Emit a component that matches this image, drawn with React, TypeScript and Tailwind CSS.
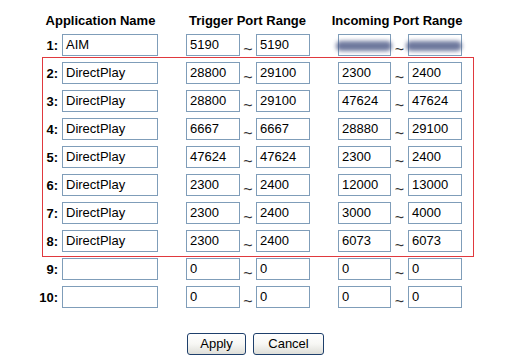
import React from "react";

type Rule = {
  name: string;
  trigStart: string;
  trigEnd: string;
  inStart: string;
  inEnd: string;
  hidden?: boolean;
};

const rules: Rule[] = [
  { name: "AIM", trigStart: "5190", trigEnd: "5190", inStart: "", inEnd: "", hidden: true },
  { name: "DirectPlay", trigStart: "28800", trigEnd: "29100", inStart: "2300", inEnd: "2400" },
  { name: "DirectPlay", trigStart: "28800", trigEnd: "29100", inStart: "47624", inEnd: "47624" },
  { name: "DirectPlay", trigStart: "6667", trigEnd: "6667", inStart: "28880", inEnd: "29100" },
  { name: "DirectPlay", trigStart: "47624", trigEnd: "47624", inStart: "2300", inEnd: "2400" },
  { name: "DirectPlay", trigStart: "2300", trigEnd: "2400", inStart: "12000", inEnd: "13000" },
  { name: "DirectPlay", trigStart: "2300", trigEnd: "2400", inStart: "3000", inEnd: "4000" },
  { name: "DirectPlay", trigStart: "2300", trigEnd: "2400", inStart: "6073", inEnd: "6073" },
  { name: "", trigStart: "0", trigEnd: "0", inStart: "0", inEnd: "0" },
  { name: "", trigStart: "0", trigEnd: "0", inStart: "0", inEnd: "0" },
];

const Field = ({ value, width, blurred }: { value: string; width: string; blurred?: boolean }) => (
  <div
    className={`relative h-[22px] ${width} shrink-0 border border-[#7f9db9] bg-white pl-[3px] text-[13px] leading-[20px] text-black`}
  >
    {value}
    {blurred && (
      <span className="absolute left-[-3px] top-[6px] h-[10px] w-[56px] rounded-full bg-[#4a5785] opacity-80 blur-[2px]" />
    )}
  </div>
);

const Tilde = ({ width }: { width: string }) => (
  <span className={`${width} shrink-0 pt-[8px] text-center text-[16px] leading-[16px] text-[#333]`}>~</span>
);

const Row = ({ idx, rule, labelWidth }: { idx: number; rule: Rule; labelWidth: string }) => (
  <div className="flex h-[22px] items-start">
    <span className={`${labelWidth} shrink-0 pt-[4px] text-right text-[13px] font-bold leading-[16px]`}>
      {idx}:
    </span>
    <div className="ml-[4px]">
      <Field value={rule.name} width="w-[96px]" />
    </div>
    <div className="ml-[28px] flex">
      <Field value={rule.trigStart} width="w-[54px]" />
      <Tilde width="w-[16px]" />
      <Field value={rule.trigEnd} width="w-[54px]" />
    </div>
    <div className="ml-[28px] flex">
      <Field value={rule.inStart} width="w-[53px]" blurred={rule.hidden} />
      <Tilde width="w-[17px]" />
      <Field value={rule.inEnd} width="w-[54px]" blurred={rule.hidden} />
    </div>
  </div>
);

export default function App() {
  return (
    <div className="h-[361px] w-[509px] bg-white font-['Liberation_Sans',Arial,sans-serif] text-black">
      <div className="flex whitespace-nowrap pt-[13px] text-[13px] font-bold leading-[16px]">
        <span className="ml-[42px] flex w-[117px] justify-center">Application Name</span>
        <span className="flex w-[177px] justify-center">Trigger Port Range</span>
        <span className="flex w-[122px] justify-center">Incoming Port Range</span>
      </div>

      <div className="mt-[5px]">
        <Row idx={1} rule={rules[0]} labelWidth="w-[58px]" />
      </div>

      <div className="ml-[42px] mt-[1px] flex w-[432px] flex-col gap-[6px] border border-[#e0393e] py-[4px]">
        {rules.slice(1, 8).map((r, i) => (
          <Row key={i} idx={i + 2} rule={r} labelWidth="w-[15px]" />
        ))}
      </div>

      <div className="mt-[1px] flex flex-col gap-[6px]">
        {rules.slice(8).map((r, i) => (
          <Row key={i} idx={i + 9} rule={r} labelWidth="w-[58px]" />
        ))}
      </div>

      <div className="ml-[187px] mt-[25px] flex gap-[7px]">
        <button className="h-[22px] w-[59px] rounded-[3px] border border-[#1e3f6b] bg-gradient-to-b from-white via-[#f7f7f4] to-[#deded8] text-[13px] leading-[18px]">
          Apply
        </button>
        <button className="h-[22px] w-[71px] rounded-[3px] border border-[#1e3f6b] bg-gradient-to-b from-white via-[#f7f7f4] to-[#deded8] text-[13px] leading-[18px]">
          Cancel
        </button>
      </div>
    </div>
  );
}
